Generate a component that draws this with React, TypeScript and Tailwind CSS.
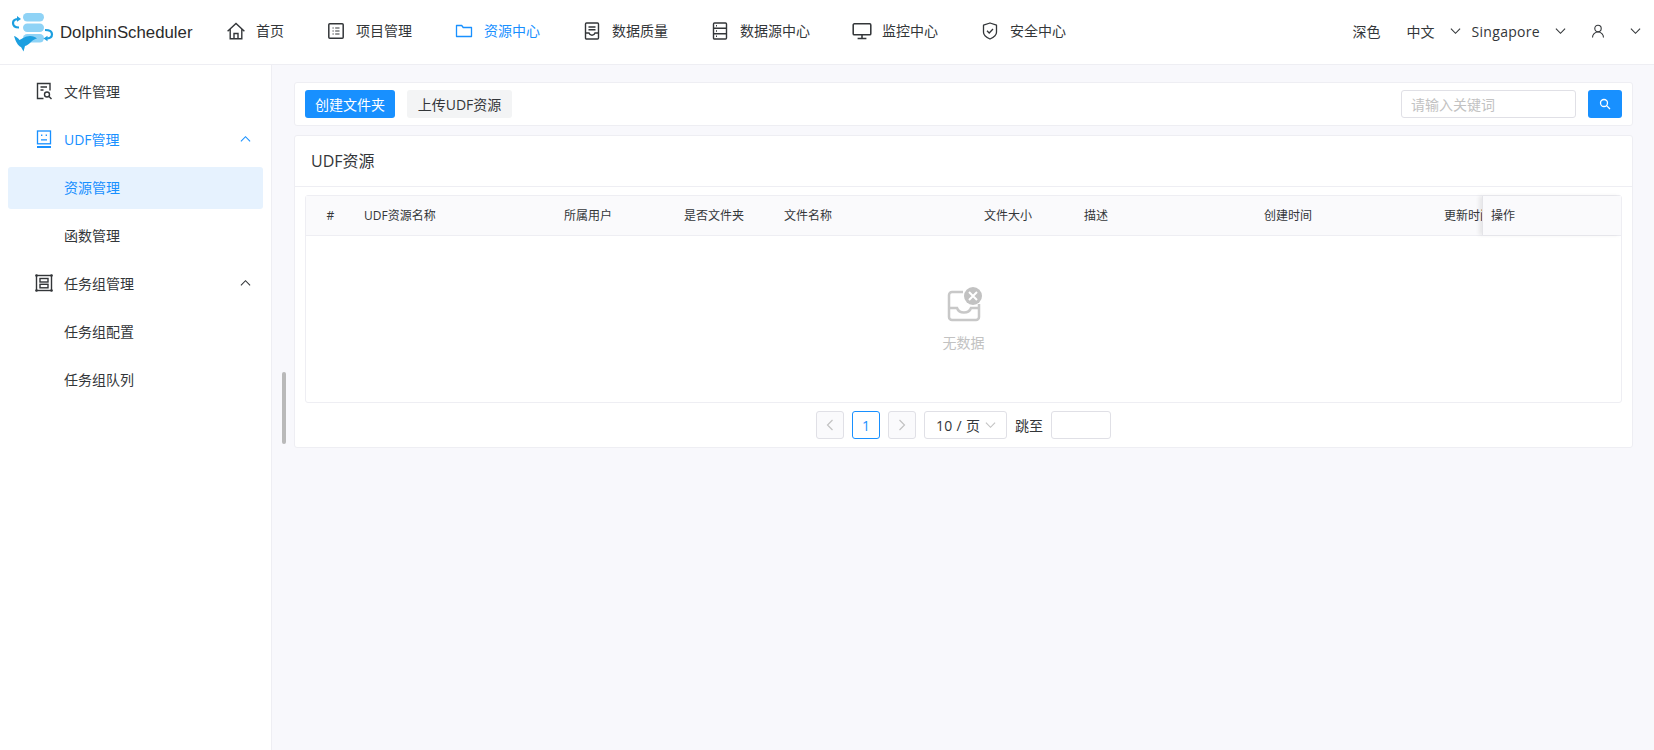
import React from "react";

const FONT = "font-['Open_Sans','Noto_Sans_CJK_SC',sans-serif]";

const Chevron = ({ up = false, className = "" }: { up?: boolean; className?: string }) => (
  <svg viewBox="0 0 12 8" className={`w-[11px] h-[8px] ${className}`} fill="none" stroke="currentColor" strokeWidth="1.2">
    <path d={up ? "M1 6.5 6 1.5l5 5" : "M1 1.5l5 5 5-5"} />
  </svg>
);

const Logo = () => (
  <svg viewBox="0 0 44 42" className="w-[44px] h-[42px] shrink-0">
    <rect x="13" y="2" width="21" height="8.500" rx="4.200" fill="#8fd3f6" />
    <rect x="13" y="12.500" width="21" height="8.500" rx="4.200" fill="#8fd3f6" />
    <rect x="13" y="23" width="21" height="8.500" rx="4.200" fill="#8fd3f6" />
    <path d="M9 8C5 8 3 9.500 3 12s2 4.500 6 4.500" fill="none" stroke="#1c9fe0" strokeWidth="2.200" />
    <path d="M7 5l4 3-4 2.800z" fill="#1c9fe0" />
    <path d="M35 19c4.500 0 7 1.500 7 4.200S39.500 27.500 36 27.500" fill="none" stroke="#1c9fe0" strokeWidth="2.200" />
    <path d="M37.500 24.800l-4 2.700 4 2.800z" fill="#1c9fe0" />
    <path d="M4 25C6 25.500 8 27 9.500 29 12 28 15 25 20 25c3 0 5.500 1 7 2.500-2.500.5-4 1.500-5.500 3-2.500 2.500-4.500 4-6.500 4.500l-1.500 5.500L11 36C8 35 5.500 30 4 25z" fill="#1c9fe0" />
  </svg>
);

const icon = "w-[18px] h-[18px] shrink-0";

const NavIcons: Record<string, React.ReactNode> = {
  home: (
    <svg viewBox="0 0 18 18" className={icon} fill="none" stroke="currentColor" strokeWidth="1.400">
      <path d="M.6 9.200 9 1.500l8.400 7.700M3.200 7v9.800h11.600V7M7 16.800v-5.300h4v5.300" />
    </svg>
  ),
  project: (
    <svg viewBox="0 0 18 18" className={icon} fill="none" stroke="currentColor" strokeWidth="1.500">
      <rect x="1.800" y="1.800" width="14.400" height="14.400" rx="1" />
      <path d="M5.500 6h1.200M5.500 9h1.200M5.500 12h1.200M8.200 6h4.300M8.200 9h4.300M8.200 12h4.300" strokeWidth="1.200" />
    </svg>
  ),
  folder: (
    <svg viewBox="0 0 18 18" className={icon} fill="none" stroke="currentColor" strokeWidth="1.300">
      <path d="M1.500 3.500h5.200l1.500 2h8.300v9h-15z" strokeLinejoin="round" />
    </svg>
  ),
  quality: (
    <svg viewBox="0 0 18 18" className={icon} fill="none" stroke="currentColor" strokeWidth="1.400">
      <rect x="2.500" y="1" width="13" height="16" rx="1" />
      <path d="M5.500 5h7M5.500 7.800h7M2.500 11h3.500c.5 1.500 1.500 2.200 3 2.200s2.500-.7 3-2.200h3.500" />
    </svg>
  ),
  source: (
    <svg viewBox="0 0 18 18" className={icon} fill="none" stroke="currentColor" strokeWidth="1.400">
      <rect x="2.500" y="1" width="13" height="16" rx="1" />
      <path d="M2.500 6.300h13M2.500 11.700h13M5 3.700h1M5 9h1M5 14.300h1" />
    </svg>
  ),
  monitor: (
    <svg viewBox="0 0 18 18" className={`${icon} scale-110`} fill="none" stroke="currentColor" strokeWidth="1.400">
      <rect x="1" y="2.500" width="16" height="10" rx="1" />
      <path d="M9 12.500v3.200M5 15.800h8" />
    </svg>
  ),
  shield: (
    <svg viewBox="0 0 18 18" className={icon} fill="none" stroke="currentColor" strokeWidth="1.300">
      <path d="M9 1l6.500 2.200v7c0 3-3 5.300-6.500 6.800-3.500-1.500-6.500-3.800-6.500-6.800v-7z" strokeLinejoin="round" />
      <path d="M6 8.800l2.200 2.200 3.800-4" />
    </svg>
  ),
};

const navItems = [
  { key: "home", label: "首页" },
  { key: "project", label: "项目管理" },
  { key: "folder", label: "资源中心", active: true },
  { key: "quality", label: "数据质量" },
  { key: "source", label: "数据源中心" },
  { key: "monitor", label: "监控中心" },
  { key: "shield", label: "安全中心" },
];

const columns = [
  { label: "#", width: "w-[46px]", extra: "justify-center pl-[3px]" },
  { label: "UDF资源名称", width: "w-[200px]" },
  { label: "所属用户", width: "w-[120px]" },
  { label: "是否文件夹", width: "w-[100px]" },
  { label: "文件名称", width: "w-[200px]" },
  { label: "文件大小", width: "w-[100px]" },
  { label: "描述", width: "w-[180px]" },
  { label: "创建时间", width: "w-[180px]" },
  { label: "更新时间", width: "w-[180px]" },
];

const SideRow = ({
  label,
  svg,
  blue,
  open,
  selected,
}: {
  label: string;
  svg?: React.ReactNode;
  blue?: boolean;
  open?: boolean;
  selected?: boolean;
}) => (
  <div
    className={`h-[42px] pb-[2px] mx-2 flex items-center rounded-[3px] text-[14px] ${
      selected ? "bg-[#e6f2fe]" : ""
    } ${blue || selected ? "text-[#1890ff]" : "text-[#333639]"}`}
  >
    <div className="w-[56px] pl-[27px] shrink-0">{svg}</div>
    <span className="flex-1">{label}</span>
    {open && <Chevron up className="mr-[12px]" />}
  </div>
);

const App = () => {
  return (
    <div className={`${FONT} w-[1654px] h-[750px] flex flex-col overflow-hidden bg-[#f8f8fc] text-[#333639]`}>
      <header className="h-[65px] shrink-0 bg-white border-b border-[#eeeef3] flex items-center">
        <div className="w-[227px] shrink-0 flex items-center pl-[10px]">
          <Logo />
          <span className="font-['Liberation_Sans',sans-serif] text-[16.800px] ml-[6px] mt-[2px] text-[#2b2b2b]">DolphinScheduler</span>
        </div>
        <nav className="flex items-center gap-[43px] text-[14px] -mt-[3px]">
          {navItems.map((n) => (
            <div key={n.key} className={`flex items-center gap-[11px] ${n.active ? "text-[#1890ff]" : ""}`}>
              {NavIcons[n.key]}
              <span>{n.label}</span>
            </div>
          ))}
        </nav>
        <div className="ml-auto flex items-center text-[14px] pr-[13px] -mt-[2px]">
          <span>深色</span>
          <span className="ml-[26px]">中文</span>
          <Chevron className="ml-[15px]" />
          <span className="ml-[11px] tracking-[0.3px]">Singapore</span>
          <Chevron className="ml-[15px]" />
          <svg viewBox="0 0 14 14" className="w-[14px] h-[14px] ml-[25px]" fill="none" stroke="currentColor" strokeWidth="1.100">
            <circle cx="7" cy="4.500" r="3.200" />
            <path d="M1.500 13.500c0-3 2.400-5.500 5.500-5.500s5.500 2.500 5.500 5.500" />
          </svg>
          <Chevron className="ml-[25px]" />
        </div>
      </header>

      <div className="flex-1 flex min-h-0">
        <aside className="w-[272px] shrink-0 bg-white border-r border-[#eeeef3] pt-[6px] flex flex-col gap-[6px]">
          <SideRow
            label="文件管理"
            svg={
              <svg viewBox="0 0 18 18" className={icon} fill="none" stroke="currentColor" strokeWidth="1.400">
                <path d="M8.500 16.500H2.500V1.500h12.500V8.500" />
                <path d="M5.500 5h6.500M5.500 8h3" />
                <circle cx="12" cy="12.500" r="2.500" />
                <path d="M14 14.500l2.500 2.500" />
              </svg>
            }
          />
          <SideRow
            label="UDF管理"
            blue
            open
            svg={
              <svg viewBox="0 0 18 18" className={`${icon} text-[#1890ff]`} fill="none" stroke="currentColor" strokeWidth="1.300">
                <rect x="2.500" y="1" width="13" height="12.800" />
                <path d="M6.700 4.500v1.400M11.300 4.500v1.400M6 9.800h6" />
                <path d="M2 17h14" strokeWidth="2" />
              </svg>
            }
          />
          <SideRow label="资源管理" selected />
          <SideRow label="函数管理" />
          <SideRow
            label="任务组管理"
            open
            svg={
              <svg viewBox="0 0 18 18" className={icon} fill="none" stroke="currentColor" strokeWidth="1.400">
                <rect x="1.500" y="1.500" width="15" height="15" />
                <rect x="5" y="4.500" width="8" height="3.500" />
                <rect x="5" y="10.300" width="8" height="3.500" />
                <g fill="currentColor" stroke="none">
                  <circle cx="1.500" cy="1.500" r="1.300" />
                  <circle cx="16.500" cy="1.500" r="1.300" />
                  <circle cx="1.500" cy="16.500" r="1.300" />
                  <circle cx="16.500" cy="16.500" r="1.300" />
                </g>
              </svg>
            }
          />
          <SideRow label="任务组配置" />
          <SideRow label="任务组队列" />
        </aside>

        <main className="relative flex-1 min-w-0 pl-[22px] pr-[21px] pt-[17px] flex flex-col gap-[9px]">
          <div className="absolute left-[10px] top-[307px] w-[4px] h-[72px] rounded-full bg-[#b9b9b9]" />

          <div className="h-[44px] bg-white border border-[#eeeef3] rounded-[3px] flex items-center pl-[10px] pr-[10px] text-[14px]">
            <button className="h-[28px] w-[90px] rounded-[3px] bg-[#1890ff] text-white">创建文件夹</button>
            <button className="h-[28px] w-[105px] ml-[12px] rounded-[3px] bg-[#f3f4f5] text-[#333639]">上传UDF资源</button>
            <input
              placeholder="请输入关键词"
              className="ml-auto h-[28px] w-[175px] rounded-[3px] border border-[#e0e0e6] px-[9px] text-[14px] outline-none placeholder:text-[#c2c2c2]"
            />
            <button className="h-[28px] w-[34px] ml-[12px] rounded-[3px] bg-[#1890ff] flex items-center justify-center">
              <svg viewBox="0 0 12 12" className="w-[12px] h-[12px]" fill="none" stroke="white" strokeWidth="1.300">
                <circle cx="5" cy="5" r="3.500" />
                <path d="M7.600 7.600 11 11" />
              </svg>
            </button>
          </div>

          <div className="h-[313px] bg-white border border-[#eeeef3] rounded-[3px] flex flex-col">
            <div className="h-[51px] shrink-0 border-b border-[#eeeef3] flex items-center pl-[16px] text-[16px]">UDF资源</div>
            <div className="mt-[8px] mx-[10px] h-[208px] border border-[#eeeef3] rounded-[3px] flex flex-col">
              <div className="h-[40px] shrink-0 bg-[#fafafc] border-b border-[#eeeef3] flex text-[12px]">
                <div className="flex-1 min-w-0 overflow-hidden flex">
                  {columns.map((c) => (
                    <div
                      key={c.label}
                      className={`${c.width} shrink-0 flex items-center whitespace-nowrap ${c.extra ?? "pl-[12px]"}`}
                    >
                      {c.label}
                    </div>
                  ))}
                </div>
                <div className="w-[139px] shrink-0 flex items-center pl-[8px] border-l border-[#e4e4e8] shadow-[-3px_0_4px_rgba(0,0,0,0.08)]">
                  操作
                </div>
              </div>
              <div className="flex-1 flex flex-col items-center pt-[51px]">
                <svg viewBox="0 0 36 36" className="w-[36px] h-[36px]">
                  <path
                    d="M17 5H6a3 3 0 0 0-3 3v22a3 3 0 0 0 3 3h24a3 3 0 0 0 3-3V17"
                    fill="none"
                    stroke="#c8c8c8"
                    strokeWidth="2.500"
                  />
                  <path d="M3 21h8c1 3 3.500 4.500 7 4.500s6-1.500 7-4.500h8" fill="none" stroke="#c8c8c8" strokeWidth="2.500" />
                  <circle cx="27" cy="9" r="9" fill="#c2c2c2" />
                  <path d="M23 5l8 8M31 5l-8 8" stroke="white" strokeWidth="2" />
                </svg>
                <span className="mt-[10px] text-[14px] leading-[20px] text-[#c2c2c2]">无数据</span>
              </div>
            </div>
            <div className="flex items-center justify-center mt-[8px] text-[14px]">
              <div className="w-[28px] h-[28px] rounded-[3px] border border-[#e0e0e6] bg-[#fafafc] flex items-center justify-center text-[#c2c2c2]">
                <svg viewBox="0 0 8 12" className="w-[8px] h-[12px]" fill="none" stroke="currentColor" strokeWidth="1.200"><path d="M6.500 1 1.500 6l5 5" /></svg>
              </div>
              <div className="w-[28px] h-[28px] ml-[8px] rounded-[3px] border border-[#1890ff] text-[#1890ff] flex items-center justify-center">1</div>
              <div className="w-[28px] h-[28px] ml-[8px] rounded-[3px] border border-[#e0e0e6] bg-[#fafafc] flex items-center justify-center text-[#c2c2c2]">
                <svg viewBox="0 0 8 12" className="w-[8px] h-[12px]" fill="none" stroke="currentColor" strokeWidth="1.200"><path d="M1.500 1l5 5-5 5" /></svg>
              </div>
              <div className="w-[83px] h-[28px] ml-[8px] rounded-[3px] border border-[#e0e0e6] flex items-center pl-[11px]">
                <span className="flex-1 tracking-[0.3px]">10 / 页</span>
                <Chevron className="mr-[10px] text-[#c2c2c2]" />
              </div>
              <span className="ml-[8px]">跳至</span>
              <div className="w-[60px] h-[28px] ml-[8px] rounded-[3px] border border-[#e0e0e6]" />
            </div>
          </div>
        </main>
      </div>
    </div>
  );
};

export default App;
